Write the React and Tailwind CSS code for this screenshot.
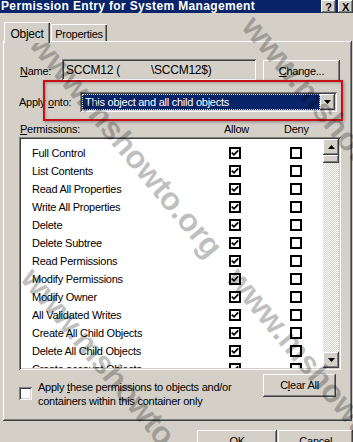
import React from "react";

const raised =
  "shadow-[inset_-1px_-1px_#404040,inset_1px_1px_#ffffff,inset_-2px_-2px_#808080,inset_2px_2px_#d4d0c8]";
const sunken =
  "shadow-[inset_1px_1px_#808080,inset_-1px_-1px_#ffffff,inset_2px_2px_#404040,inset_-2px_-2px_#d4d0c8]";

const permissions = [
  "Full Control",
  "List Contents",
  "Read All Properties",
  "Write All Properties",
  "Delete",
  "Delete Subtree",
  "Read Permissions",
  "Modify Permissions",
  "Modify Owner",
  "All Validated Writes",
  "Create All Child Objects",
  "Delete All Child Objects",
  "Create account Objects",
];

const Check = () => (
  <svg width="8" height="8" viewBox="0 0 8 8">
    <polyline points="0.8,3.6 3,5.8 7.2,1.4" fill="none" stroke="#000" strokeWidth="1.8" />
  </svg>
);

const Box = ({ checked }) => (
  <div className="w-[12px] h-[12px] border-2 border-black bg-white flex items-center justify-center shrink-0">
    {checked && <Check />}
  </div>
);

const Arrow = ({ up }) => (
  <svg width="7" height="4" viewBox="0 0 7 4">
    <polygon points={up ? "3.5,0 7,4 0,4" : "0,0 7,0 3.5,4"} fill="#000" />
  </svg>
);

const U = ({ children }) => <span className="underline underline-offset-1">{children}</span>;

// diagonal site watermark lying over the whole dialog
const Watermark = ({ className }) => (
  <span
    className={
      "absolute origin-top-left rotate-[50deg] whitespace-nowrap text-[32px] leading-[32px] font-bold text-black/25 pointer-events-none " +
      className
    }
  >
    www.mshowto.org&nbsp;&nbsp;&nbsp;www.mshowto.org
  </span>
);

export default function App() {
  return (
    <div className="relative w-[353px] h-[442px] overflow-hidden bg-[#d4d0c8] text-[11px] tracking-[-0.25px] text-black font-['Liberation_Sans',Arial,sans-serif]">
      {/* title bar */}
      <div className="h-[13px] bg-[#0a246a] flex justify-between overflow-hidden">
        <span className="-mt-[1px] pl-[1px] text-white font-bold text-[12px] leading-[14px] tracking-[0.35px]">
          Permission Entry for System Management
        </span>
        <div className="flex gap-[2px]">
          <div className={"w-[15px] h-[13px] bg-[#d4d0c8] flex items-end justify-center font-bold text-[11px] leading-[11px] " + raised}>?</div>
          <div className={"w-[15px] h-[13px] bg-[#d4d0c8] flex items-end justify-center font-bold text-[11px] leading-[11px] " + raised}>X</div>
        </div>
      </div>

      {/* tabs */}
      <div className="h-[28px] flex items-end pl-[4px]">
        <div className="relative z-10 -mb-[2px] w-[46px] h-[21px] bg-[#d4d0c8] flex justify-center pt-[3px] text-[12px] shadow-[inset_1px_1px_#ffffff,inset_-1px_0_#404040,inset_-2px_0_#808080]">
          Object
        </div>
        <div className="ml-[1px] w-[56px] h-[17px] bg-[#d4d0c8] flex justify-center pt-[2px] shadow-[inset_1px_1px_#ffffff,inset_-1px_0_#404040,inset_-2px_0_#808080]">
          Properties
        </div>
      </div>

      {/* tab panel */}
      <div className={"ml-[3px] w-[349px] h-[380px] pl-[16px] flex flex-col " + raised}>
        <div className="mt-[18px] flex items-start">
          <span className="ml-[1px] w-[42px] mt-[4px]">
            <U>N</U>ame:
          </span>
          <div className={"w-[194px] h-[21px] flex items-center pl-[4px] text-[12px] " + sunken}>
            <span>SCCM12 (</span>
            <span className="ml-[31px]">\SCCM12$)</span>
          </div>
          <div className={"ml-[7px] mt-[1px] w-[77px] h-[22px] flex items-center justify-center " + raised}>
            <span>
              <U>C</U>hange...
            </span>
          </div>
        </div>

        <div className="mt-[10px] flex items-center">
          <span className="w-[61px]">
            Apply <U>o</U>nto:
          </span>
          <div className={"w-[257px] h-[20px] p-[2px] bg-white flex " + sunken}>
            <div className="flex-1 bg-[#0a246a] border border-dotted border-[#e8e8a0] text-white flex items-center pl-[2px]">
              This object and all child objects
            </div>
            <div className={"w-[15px] bg-[#d4d0c8] flex items-center justify-center " + raised}>
              <Arrow />
            </div>
          </div>
        </div>

        <div className="mt-[10px] h-[14px] flex items-center">
          <span className="ml-[1px] w-[204px]">
            <U>P</U>ermissions:
          </span>
          <span className="w-[60px]">Allow</span>
          <span>Deny</span>
        </div>

        <div className={"mt-[1px] w-[322px] h-[233px] bg-white p-[2px] flex " + sunken}>
          <div className="flex-1 overflow-hidden pt-[5px]">
            {permissions.map((p) => (
              <div key={p} className="h-[18px] flex items-center pl-[11px]">
                <span className="w-[197px]">{p}</span>
                <Box checked />
                <div className="ml-[49px]">
                  <Box />
                </div>
              </div>
            ))}
          </div>
          <div className="w-[16px] flex flex-col bg-[repeating-conic-gradient(#d4d0c8_0%_25%,#ffffff_0%_50%)] bg-[length:2px_2px]">
            <div className={"h-[16px] bg-[#d4d0c8] flex items-center justify-center " + raised}>
              <Arrow up />
            </div>
            <div className={"h-[8px] bg-[#d4d0c8] " + raised} />
            <div className="flex-1" />
            <div className={"h-[16px] bg-[#d4d0c8] flex items-center justify-center " + raised}>
              <Arrow />
            </div>
          </div>
        </div>

        <div className="mt-[4px] flex items-start">
          <div className={"mt-[13px] w-[13px] h-[13px] bg-white shrink-0 " + sunken} />
          <div className="ml-[6px] mt-[6px] w-[220px] leading-[14px]">
            Apply <U>t</U>hese permissions to objects and/or
            <br />
            containers within this container only
          </div>
          <div className={"ml-[5px] w-[73px] h-[23px] flex items-center justify-center " + raised}>
            <span>
              C<U>l</U>ear All
            </span>
          </div>
        </div>
      </div>

      {/* dialog buttons */}
      <div className="mt-[9px] flex pl-[197px]">
        <div className={"w-[81px] h-[23px] flex items-center justify-center " + raised}>OK</div>
        <div className={"ml-[1px] w-[75px] h-[23px] flex items-center justify-center " + raised}>Cancel</div>
      </div>

      {/* annotation box */}
      <div className="absolute left-[43px] top-[80px] w-[300px] h-[41px] border-2 border-[#c8101a] shadow-[1px_1px_3px_rgba(0,0,0,0.35),inset_1px_1px_3px_rgba(0,0,0,0.25)] pointer-events-none" />

      {/* watermark */}
      <Watermark className="left-[49px] top-[28px]" />
      <Watermark className="left-[261px] top-[10px]" />
      <Watermark className="left-[40px] top-[262px]" />
    </div>
  );
}
